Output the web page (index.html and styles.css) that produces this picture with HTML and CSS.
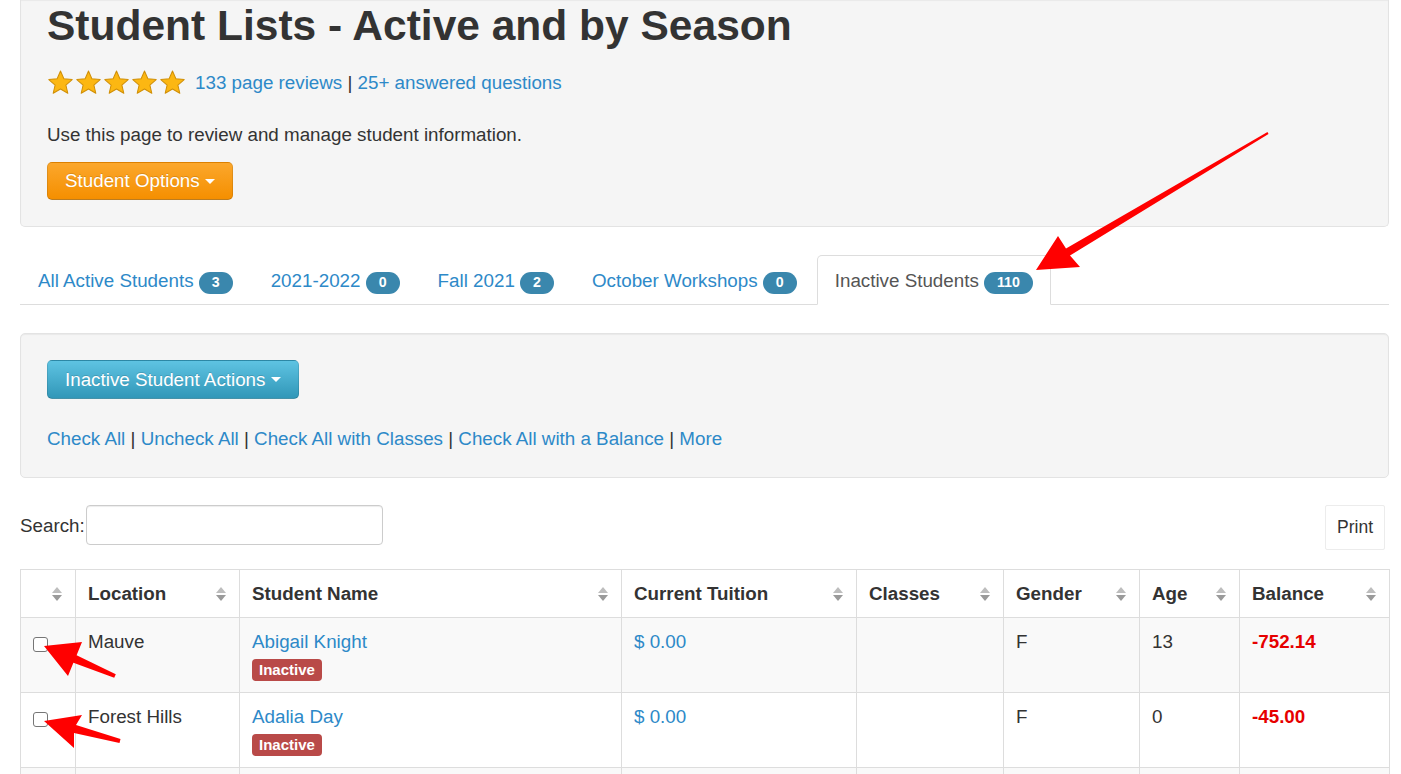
FILE: index.html
```html
<!DOCTYPE html>
<html lang="en">
<head>
    <meta charset="UTF-8">
    <meta name="viewport" content="width=device-width, initial-scale=1.0">
    <title>Student Lists - Active and by Season</title>
    <link rel="stylesheet" href="styles.css">
</head>
<body>
    <svg width="0" height="0" class="defs">
        <symbol id="star" viewBox="0 0 24 24">
            <path d="M12 1.8l3 6.9 7.4.7-5.6 4.9 1.7 7.3L12 17.8l-6.5 3.8 1.7-7.3-5.6-4.9 7.4-.7z"
                  fill="#fcb712" stroke="#d08f06" stroke-width="0.9" stroke-linejoin="round"/>
        </symbol>
        <symbol id="sort" viewBox="0 0 12 18">
            <path d="M1 8l5-6 5 6z" fill="#bdbdbd"/>
            <path d="M1 10l5 6 5-6z" fill="#9a9a9a"/>
        </symbol>
    </svg>

    <div class="page">
        <div class="well hero">
            <h1>Student Lists - Active and by Season</h1>
            <div class="rating">
                <span class="stars">
                    <svg><use href="#star"/></svg>
                    <svg><use href="#star"/></svg>
                    <svg><use href="#star"/></svg>
                    <svg><use href="#star"/></svg>
                    <svg><use href="#star"/></svg>
                </span>
                <span><a href="#">133 page reviews</a> | <a href="#">25+ answered questions</a></span>
            </div>
            <p class="intro">Use this page to review and manage student information.</p>
            <button class="btn btn-warning">Student Options <span class="caret"></span></button>
        </div>

        <ul class="tabs">
            <li><a href="#">All Active Students <span class="badge">3</span></a></li>
            <li><a href="#">2021-2022 <span class="badge">0</span></a></li>
            <li><a href="#">Fall 2021 <span class="badge">2</span></a></li>
            <li><a href="#">October Workshops <span class="badge">0</span></a></li>
            <li class="active"><a href="#">Inactive Students <span class="badge">110</span></a></li>
        </ul>

        <div class="well actions">
            <button class="btn btn-info">Inactive Student Actions <span class="caret"></span></button>
            <p class="checks">
                <a href="#">Check All</a> | <a href="#">Uncheck All</a> | <a href="#">Check All with Classes</a> | <a href="#">Check All with a Balance</a> | <a href="#">More</a>
            </p>
        </div>

        <div class="table-tools">
            <label class="search">Search:<input type="search"></label>
            <button class="btn-print">Print</button>
        </div>

        <table class="students">
            <colgroup>
                <col style="width: 55px">
                <col style="width: 164px">
                <col style="width: 382px">
                <col style="width: 235px">
                <col style="width: 147px">
                <col style="width: 136px">
                <col style="width: 100px">
                <col style="width: 150px">
            </colgroup>
            <thead>
                <tr>
                    <th><div class="th-in"><span></span><svg class="sort"><use href="#sort"/></svg></div></th>
                    <th><div class="th-in"><span>Location</span><svg class="sort"><use href="#sort"/></svg></div></th>
                    <th><div class="th-in"><span>Student Name</span><svg class="sort"><use href="#sort"/></svg></div></th>
                    <th><div class="th-in"><span>Current Tuition</span><svg class="sort"><use href="#sort"/></svg></div></th>
                    <th><div class="th-in"><span>Classes</span><svg class="sort"><use href="#sort"/></svg></div></th>
                    <th><div class="th-in"><span>Gender</span><svg class="sort"><use href="#sort"/></svg></div></th>
                    <th><div class="th-in"><span>Age</span><svg class="sort"><use href="#sort"/></svg></div></th>
                    <th><div class="th-in"><span>Balance</span><svg class="sort"><use href="#sort"/></svg></div></th>
                </tr>
            </thead>
            <tbody>
                <tr>
                    <td><input type="checkbox" class="check"></td>
                    <td>Mauve</td>
                    <td><a href="#">Abigail Knight</a><div><span class="label">Inactive</span></div></td>
                    <td><a href="#">$ 0.00</a></td>
                    <td></td>
                    <td>F</td>
                    <td>13</td>
                    <td class="owed">-752.14</td>
                </tr>
                <tr>
                    <td><input type="checkbox" class="check"></td>
                    <td>Forest Hills</td>
                    <td><a href="#">Adalia Day</a><div><span class="label">Inactive</span></div></td>
                    <td><a href="#">$ 0.00</a></td>
                    <td></td>
                    <td>F</td>
                    <td>0</td>
                    <td class="owed">-45.00</td>
                </tr>
                <tr class="more">
                    <td></td>
                    <td></td>
                    <td></td>
                    <td></td>
                    <td></td>
                    <td></td>
                    <td></td>
                    <td></td>
                </tr>
            </tbody>
        </table>
    </div>

    <!-- red annotation arrows drawn over the screenshot -->
    <svg class="annotations" width="1401" height="774" viewBox="0 0 1401 774">
        <polygon fill="#ff0000" points="1267.5,132.1 1066,248.6 1058,236 1036,270 1080,267 1070,255.4 1268.5,133.9"/>
        <polygon fill="#ff0000" points="44,646 82,642 76.6,655.3 115.8,674.2 114.2,677.8 73.4,662.7 68,676"/>
        <polygon fill="#ff0000" points="44,721 82,715 76,725.1 120.5,739.1 119.5,742.9 74,732.9 74,748"/>
    </svg>
</body>
</html>
```

FILE: styles.css
```css
body {
    margin: 0;
    font-family: "Liberation Sans", Arial, sans-serif;
    font-size: 18.8px;
    line-height: 27px;
    color: #333;
    background: #fff;
}

a {
    color: #2d89c8;
    text-decoration: none;
}

.defs {
    position: absolute;
}

.page {
    padding: 0 12px 0 20px;
}

/* grey boxes */
.well {
    background: #f5f5f5;
    border: 1px solid #e3e3e3;
    border-radius: 5px;
    box-shadow: inset 0 1px 1px rgba(0, 0, 0, 0.05);
}

.hero {
    display: flex;
    flex-direction: column;
    align-items: flex-start;
    border-top: 0;
    border-radius: 0 0 5px 5px;
    padding: 3px 26px 26px;
}

h1 {
    margin: 0;
    font-size: 42.5px;
    line-height: 46px;
    font-weight: bold;
    color: #333;
}

.rating {
    display: flex;
    align-items: center;
    margin-top: 20px;
    height: 27px;
}

.stars {
    display: flex;
    gap: 1px;
    margin-right: 9px;
}

.stars svg {
    width: 27px;
    height: 27px;
}

.intro {
    margin: 25px 0 14px;
}

/* buttons */
.btn {
    font-family: inherit;
    font-size: 18.8px;
    line-height: 26px;
    padding: 5px 17px;
    color: #fff;
    border: 1px solid rgba(0, 0, 0, 0.1);
    border-bottom-color: rgba(0, 0, 0, 0.25);
    border-radius: 5px;
    text-shadow: 0 -1px 0 rgba(0, 0, 0, 0.15);
    cursor: pointer;
}

.btn-warning {
    background: linear-gradient(#fba72c, #f58f00);
}

.btn-info {
    padding: 5.5px 17px;
    background: linear-gradient(#5ec3e2, #3197b8);
}

.caret {
    display: inline-block;
    width: 0;
    height: 0;
    vertical-align: middle;
    margin-top: -2px;
    border-top: 5px solid #fff;
    border-left: 5px solid transparent;
    border-right: 5px solid transparent;
}

/* tabs */
.tabs {
    display: flex;
    margin: 28px 0 0;
    padding: 0;
    list-style: none;
    border-bottom: 1px solid #ddd;
}

.tabs li {
    margin-right: 2px;
    margin-bottom: -1px;
}

.tabs a {
    display: block;
    padding: 11px 17px 10px;
    border: 1px solid transparent;
    border-radius: 5px 5px 0 0;
}

.tabs .active a {
    color: #555;
    background: #fff;
    border-color: #ddd #ddd transparent;
}

.badge {
    display: inline-block;
    padding: 2.5px 13px;
    font-size: 14.2px;
    line-height: 17px;
    font-weight: bold;
    color: #fff;
    background: #3a87ad;
    border-radius: 11px;
}

.actions {
    margin-top: 28px;
    padding: 26px 26px 25px;
}

.checks {
    margin: 26px 0 0;
}

/* search + print */
.table-tools {
    display: flex;
    justify-content: space-between;
    align-items: flex-start;
    margin-top: 27px;
}

.search {
    display: flex;
    align-items: center;
    height: 40px;
}

.search input {
    box-sizing: border-box;
    width: 297px;
    height: 40px;
    margin-left: 1px;
    padding: 4px 8px;
    font-family: inherit;
    font-size: 18.8px;
    border: 1px solid #ccc;
    border-radius: 4px;
    box-shadow: inset 0 1px 1px rgba(0, 0, 0, 0.075);
}

.btn-print {
    height: 45px;
    margin-right: 4px;
    padding: 0 11px;
    font-family: inherit;
    font-size: 17.5px;
    color: #333;
    background: #fff;
    border: 1px solid #ececec;
    border-radius: 2px;
}

/* table */
.students {
    width: 1369px;
    margin-top: 19px;
    border-collapse: collapse;
    table-layout: fixed;
}

.students th,
.students td {
    padding: 10px 12px;
    border: 1px solid #ddd;
    text-align: left;
    vertical-align: top;
}

.students th {
    font-weight: bold;
}

.th-in {
    display: flex;
    justify-content: space-between;
    align-items: center;
    min-height: 27px;
}

.sort {
    width: 12px;
    height: 18px;
    flex: none;
}

.students tbody tr:nth-child(odd) {
    background: #f9f9f9;
}

.students .more td {
    height: 54px;
}

.check {
    appearance: none;
    display: block;
    width: 15px;
    height: 15px;
    margin: 9px 0 0;
    background: #fff;
    border: 1px solid #767676;
    border-radius: 3px;
}

.label {
    display: inline-block;
    padding: 2.5px 7px;
    font-size: 15px;
    line-height: 17px;
    font-weight: bold;
    color: #fff;
    background: #b94a48;
    border-radius: 4px;
}

.owed {
    color: #e60000;
    font-weight: bold;
}

.annotations {
    position: absolute;
    top: 0;
    left: 0;
    pointer-events: none;
}
```
